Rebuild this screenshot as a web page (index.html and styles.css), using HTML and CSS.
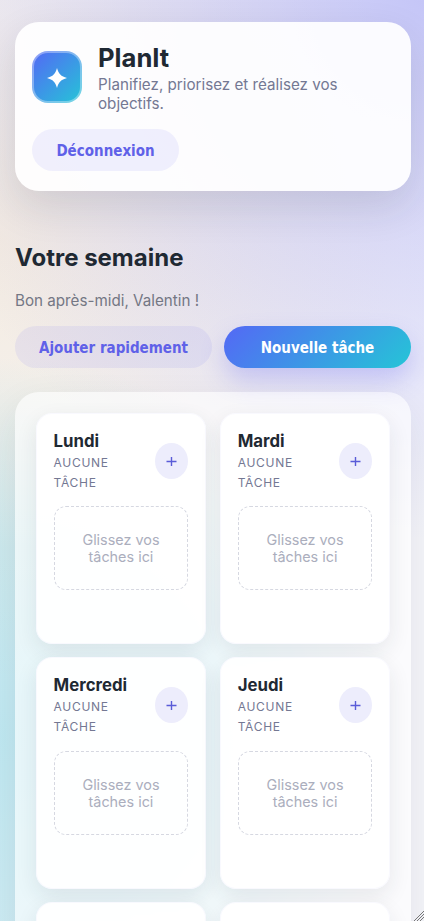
FILE: index.html
```html
<!DOCTYPE html>
<html lang="fr">
<head>
<meta charset="utf-8">
<meta name="viewport" content="width=device-width, initial-scale=1">
<title>PlanIt</title>
<link rel="stylesheet" href="styles.css">
</head>
<body>
<div class="app">
  <header class="topbar">
    <div class="brand">
      <div class="logo">
        <svg viewBox="0 0 20 20" width="20" height="20"><path d="M10 0C11.500 5.500 14 8.500 20 10C14 11.500 11.500 14.500 10 20C8.500 14.500 6 11.500 0 10C6 8.500 8.500 5.500 10 0Z" fill="#fff"/></svg>
      </div>
      <div class="brand-text">
        <h1>PlanIt</h1>
        <p>Planifiez, priorisez et réalisez vos objectifs.</p>
      </div>
    </div>
    <button class="btn ghost logout">Déconnexion</button>
  </header>
  <main>
    <section class="intro">
      <h2>Votre semaine</h2>
      <p>Bon après-midi, Valentin !</p>
      <div class="actions">
        <button class="btn ghost quick">Ajouter rapidement</button>
        <button class="btn primary">Nouvelle tâche</button>
      </div>
    </section>
    <section class="board">
      <article class="day">
        <div class="day-head"><div><h3>Lundi</h3><span class="count">Aucune tâche</span></div><button class="add" aria-label="Ajouter"><svg viewBox="0 0 11 11" width="11" height="11"><path d="M.5 5.500h10M5.500 1v9"/></svg></button></div>
        <div class="drop">Glissez vos tâches ici</div>
      </article>
      <article class="day">
        <div class="day-head"><div><h3>Mardi</h3><span class="count">Aucune tâche</span></div><button class="add" aria-label="Ajouter"><svg viewBox="0 0 11 11" width="11" height="11"><path d="M.5 5.500h10M5.500 1v9"/></svg></button></div>
        <div class="drop">Glissez vos tâches ici</div>
      </article>
      <article class="day">
        <div class="day-head"><div><h3>Mercredi</h3><span class="count">Aucune tâche</span></div><button class="add" aria-label="Ajouter"><svg viewBox="0 0 11 11" width="11" height="11"><path d="M.5 5.500h10M5.500 1v9"/></svg></button></div>
        <div class="drop">Glissez vos tâches ici</div>
      </article>
      <article class="day">
        <div class="day-head"><div><h3>Jeudi</h3><span class="count">Aucune tâche</span></div><button class="add" aria-label="Ajouter"><svg viewBox="0 0 11 11" width="11" height="11"><path d="M.5 5.500h10M5.500 1v9"/></svg></button></div>
        <div class="drop">Glissez vos tâches ici</div>
      </article>
      <article class="day"></article>
      <article class="day"></article>
    </section>
  </main>
  <svg class="grip" viewBox="0 0 10 10" width="10" height="10"><path d="M0 10L10 0M3 10L10 3M6 10L10 6"/></svg>
</div>
</body>
</html>
```
FILE: styles.css
```css
* { box-sizing: border-box; }
body {
  margin: 0;
  font-family: Inter, "Liberation Sans", sans-serif;
  color: #1f2933;
}
h1, h2, h3, p { margin: 0; }
button { border: 0; padding: 0; }

.app {
  position: relative;
  height: 921px;
  overflow: hidden;
  padding: 22px 13px 0 15px;
  background:
    radial-gradient(circle 540px at 100% 0, rgba(99, 102, 241, .33), rgba(99, 102, 241, 0)),
    radial-gradient(ellipse 400px 380px at 0 80%, rgba(34, 195, 216, .25), rgba(34, 195, 216, .19) 50%, rgba(34, 195, 216, 0)),
    radial-gradient(circle 440px at 0 26%, rgba(240, 190, 100, .17), rgba(240, 190, 100, 0)),
    #f5f5fa;
}

.topbar {
  height: 169px;
  padding: 20px 17px 0;
  border-radius: 24px;
  background: rgba(255, 255, 255, .92);
  box-shadow: 0 16px 40px rgba(31, 41, 51, .12);
}
.brand { display: flex; align-items: center; gap: 16px; }
.logo {
  display: flex;
  align-items: center;
  justify-content: center;
  flex: none;
  width: 50px;
  height: 52px;
  margin-bottom: 2px;
  border: 2px solid rgba(255, 255, 255, .35);
  border-radius: 16px;
  background: linear-gradient(135deg, #5468f5, #25c5d7) border-box;
}
.logo svg { display: block; margin-top: 2px; }
h1 { font-size: 25.600px; line-height: 31px; font-weight: 700; }
.brand-text p { margin-top: 2px; font-size: 15.200px; line-height: 19px; color: #747893; }

.btn {
  height: 42px;
  padding-top: 2px;
  border-radius: 21px;
  font-family: "DejaVu Sans", sans-serif;
  font-stretch: condensed;
  font-size: 15px;
  font-weight: 700;
}
.ghost { background: rgba(99, 102, 241, .09); color: #5f61e8; }
.logout { display: block; width: 147px; margin-top: 16px; }

.intro { padding-top: 51px; }
h2 { font-size: 24px; line-height: 31px; font-weight: 700; }
.intro p { margin-top: 18px; font-size: 15.200px; line-height: 20px; color: #747784; }
.actions { display: flex; gap: 12px; margin-top: 15px; }
.quick { width: 197px; }
.primary {
  flex: 1;
  color: #fff;
  background: linear-gradient(135deg, #5468f5, #25c5d7);
  box-shadow: 0 12px 24px rgba(99, 102, 241, .28);
}

.board {
  display: grid;
  grid-template-columns: 1fr 1fr;
  grid-auto-rows: 231.450px;
  gap: 13px 13.400px;
  margin-top: 24px;
  height: 760px;
  padding: 21px 20.600px;
  border-radius: 24px;
  background: rgba(255, 255, 255, .6);
  box-shadow: 0 16px 40px rgba(31, 41, 51, .09);
}
.day {
  padding: 18px;
  border-radius: 16px;
  background: rgba(255, 255, 255, .95);
  box-shadow: 0 8px 22px rgba(31, 41, 51, .09), inset 0 0 0 1px rgba(99, 102, 241, .04);
}
.day-head { display: flex; align-items: center; justify-content: space-between; height: 60px; }
.day-head > div { width: 75px; padding-top: 2px; }
h3 { margin-bottom: 2px; margin-top: -2px; font-size: 16.800px; line-height: 20px; font-weight: 700; }
.count {
  display: block;
  margin-bottom: -2px;
  font-size: 12px;
  line-height: 20px;
  letter-spacing: .7px;
  text-transform: uppercase;
  color: #747893;
}
.add {
  display: flex;
  align-items: center;
  justify-content: center;
  width: 33px;
  height: 36px;
  border-radius: 50%;
  background: #ededfc;
}
.add path { stroke: #5a5cd8; stroke-width: 1.400; }
.drop {
  display: flex;
  align-items: center;
  justify-content: center;
  height: 84px;
  margin-top: 15.100px;
  padding: 0 24px;
  border: 1px dashed #d6d8e1;
  border-radius: 12px;
  font-size: 14.400px;
  line-height: 17px;
  text-align: center;
  color: #abaebd;
}
.grip { position: absolute; right: 0; bottom: 0; }
.grip path { stroke: #777; stroke-width: 1; }
```
